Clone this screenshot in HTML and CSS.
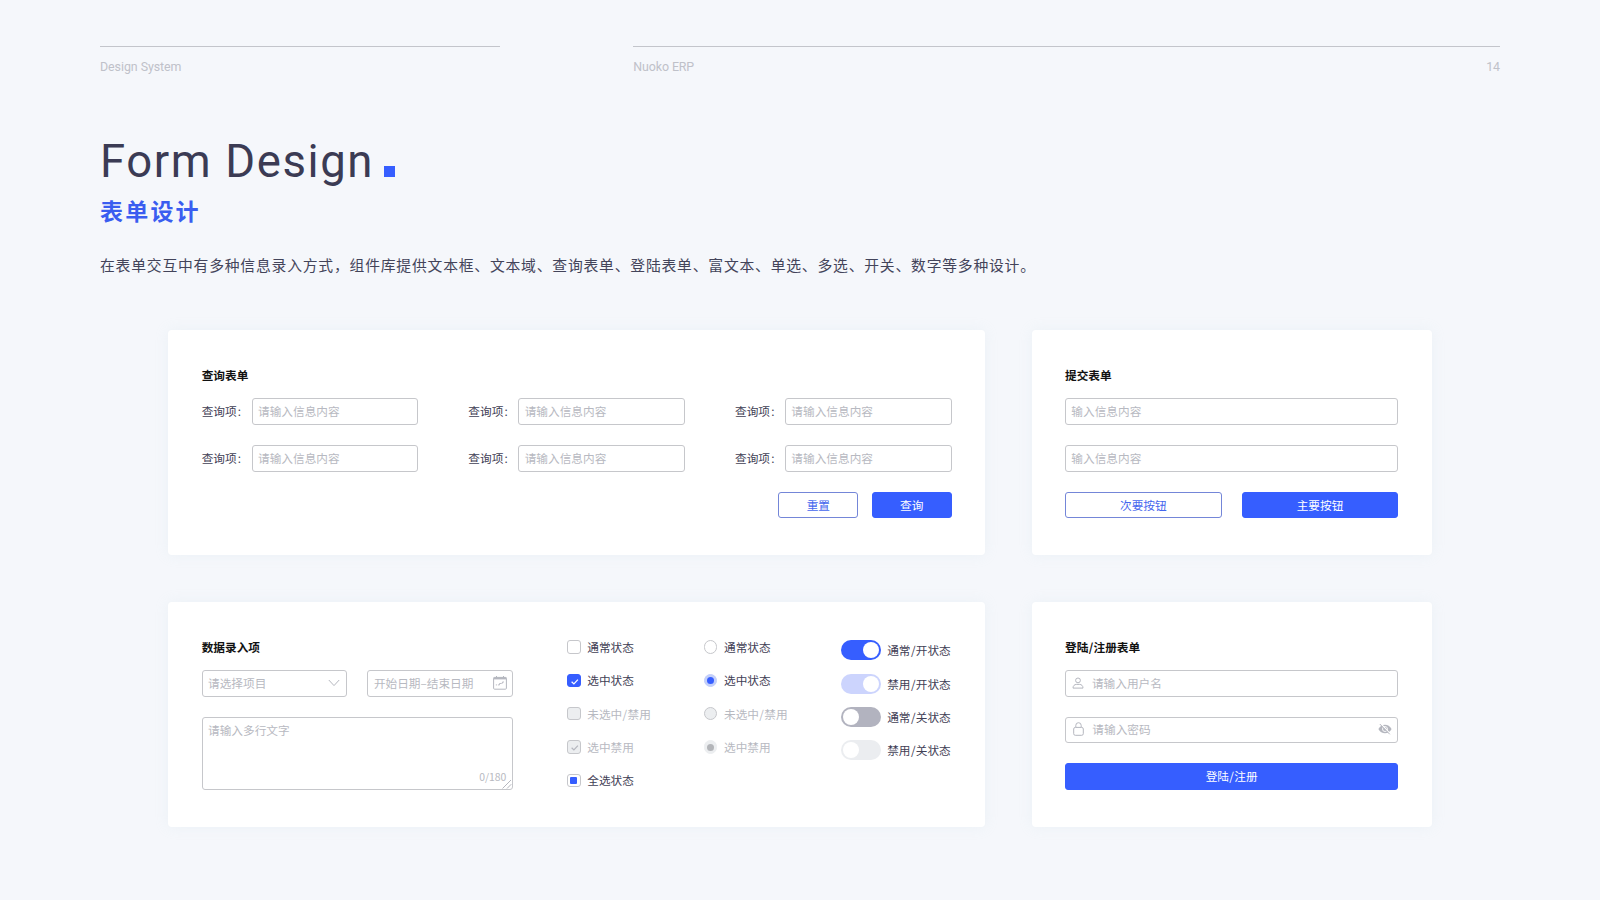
FILE: index.html
```html
<!DOCTYPE html>
<html lang="zh-CN">
<head>
<meta charset="utf-8">
<title>Form Design</title>
<link rel="stylesheet" href="styles.css">
</head>
<body>
<div class="page">
  <header class="top">
    <div class="top-left"><span>Design System</span></div>
    <div class="top-right"><span>Nuoko ERP</span><span>14</span></div>
  </header>
  <section class="intro">
    <h1 class="title"><span class="title-text">Form Design</span><i class="dot"></i></h1>
    <h2 class="subtitle">表单设计</h2>
    <p class="desc">在表单交互中有多种信息录入方式，组件库提供文本框、文本域、查询表单、登陆表单、富文本、单选、多选、开关、数字等多种设计。</p>
  </section>
  <main class="cards">
    <section class="card">
      <h3 class="card-title">查询表单</h3>
      <div class="query-grid">
        <div class="query"><span class="label">查询项<span class="colon">:</span></span><div class="field">请输入信息内容</div></div>
        <div class="query"><span class="label">查询项<span class="colon">:</span></span><div class="field">请输入信息内容</div></div>
        <div class="query"><span class="label">查询项<span class="colon">:</span></span><div class="field">请输入信息内容</div></div>
        <div class="query"><span class="label">查询项<span class="colon">:</span></span><div class="field">请输入信息内容</div></div>
        <div class="query"><span class="label">查询项<span class="colon">:</span></span><div class="field">请输入信息内容</div></div>
        <div class="query"><span class="label">查询项<span class="colon">:</span></span><div class="field">请输入信息内容</div></div>
      </div>
      <div class="query-actions"><div class="btn small">重置</div><div class="btn primary small">查询</div></div>
    </section>

    <section class="card">
      <h3 class="card-title">提交表单</h3>
      <div class="stack">
        <div class="field">输入信息内容</div>
        <div class="field">输入信息内容</div>
        <div class="split"><div class="btn">次要按钮</div><div class="btn primary">主要按钮</div></div>
      </div>
    </section>

    <section class="card entry">
      <div class="entry-form">
        <h3 class="card-title">数据录入项</h3>
        <div class="stack">
          <div class="split">
            <div class="field select">请选择项目
              <svg class="chevron" viewBox="0 0 12 8"><path d="M.8 1 6 6.6 11.2 1"/></svg>
            </div>
            <div class="field date">开始日期–结束日期
              <svg class="calendar" viewBox="0 0 14 14"><rect x=".6" y="1.4" width="12.8" height="11.8" rx="1"/><path class="band" d="M.6 2.4h12.8"/><path d="M3.500 0v3M10.500 0v3"/><path class="marks" d="M2.800 8.900h1.300M5 8.900h1.500V7.500h2.200M9.400 7.500V6h1.600"/></svg>
            </div>
          </div>
          <div class="field area">请输入多行文字
            <span class="count">0/180</span>
            <svg class="grip" viewBox="0 0 10 10"><path d="M.5 9.500 9 1M5 9.500 9.300 5.200"/></svg>
          </div>
        </div>
      </div>
      <ul class="options checks">
        <li><i class="box"></i>通常状态</li>
        <li><i class="box on"><svg viewBox="0 0 14 14"><path d="m3.800 7.100 2.400 2.300 4.200-4.500"/></svg></i>选中状态</li>
        <li class="off"><i class="box dim"></i>未选中<span class="slash">/</span>禁用</li>
        <li class="off"><i class="box dim"><svg viewBox="0 0 14 14"><path d="m3.800 7.100 2.400 2.300 4.200-4.500"/></svg></i>选中禁用</li>
        <li><i class="box all"></i>全选状态</li>
      </ul>
      <ul class="options radios">
        <li><i class="radio"></i>通常状态</li>
        <li><i class="radio on"></i>选中状态</li>
        <li class="off"><i class="radio dim"></i>未选中<span class="slash">/</span>禁用</li>
        <li class="off"><i class="radio dim-on"></i>选中禁用</li>
      </ul>
      <ul class="options switches">
        <li><i class="switch on"></i>通常<span class="slash">/</span>开状态</li>
        <li><i class="switch on-dim"></i>禁用<span class="slash">/</span>开状态</li>
        <li><i class="switch"></i>通常<span class="slash">/</span>关状态</li>
        <li><i class="switch off-dim"></i>禁用<span class="slash">/</span>关状态</li>
      </ul>
    </section>

    <section class="card">
      <h3 class="card-title">登陆<span class="slash">/</span>注册表单</h3>
      <div class="stack">
        <div class="field login"><svg class="user" viewBox="0 0 12 12"><circle cx="6" cy="3.400" r="2.400"/><path d="M1 11.100c0-2.400 1.600-3.700 3.300-3.700h3.400c1.700 0 3.300 1.300 3.300 3.700z"/></svg>请输入用户名</div>
        <div class="field login pass"><svg class="lock" viewBox="0 0 11 14"><rect x=".7" y="5.400" width="9.600" height="7.900" rx="1.600"/><path d="M2.800 5.200V3.400a2.700 2.700 0 0 1 5.400 0v1.800"/></svg>请输入密码
          <svg class="eye" viewBox="0 0 14 12"><path class="solid" d="M.4 6C2 3.100 4.300 1.700 7 1.700S12 3.100 13.600 6C12 8.900 9.700 10.300 7 10.300S2 8.900.4 6z"/><circle class="pupil" cx="7" cy="6" r="2.500"/><path class="gap" d="M2.600.5 12.400 10.900"/><path d="m1.800 1 10 10.300"/></svg>
        </div>
        <div class="btn primary">登陆<span class="slash">/</span>注册</div>
      </div>
    </section>
  </main>
</div>
</body>
</html>
```
FILE: styles.css
```css
* { box-sizing: border-box; }
body {
  margin: 0;
  background: #f5f7fb;
  color: #3f4055;
  font: 11.67px/20px "Noto Sans CJK SC", sans-serif;
}
h1, h2, h3, p, ul { margin: 0; padding: 0; }
ul { list-style: none; }
i { font-style: normal; }
svg { fill: none; stroke: #b5b7bf; stroke-width: 1; flex: none; }

.page { width: 1600px; height: 900px; padding: 45.5px 100px 0; overflow: hidden; }

.top { display: grid; grid-template-columns: 400px 866.67px; column-gap: 133.33px; font: 12.4px/20px Roboto, sans-serif; color: #bfc1c9; }
.top-left, .top-right { display: flex; justify-content: space-between; border-top: 1px solid #c3c5cb; padding-top: 10.4px; height: 40px; }
.top-left { letter-spacing: -.05px; }
.top-right { letter-spacing: -.1px; }

.intro { height: 244.5px; padding-top: 46.4px; }
.title { display: flex; align-items: baseline; height: 60px; font: 400 45.5px/60px Roboto, sans-serif; color: #3b3b54; }
.title-text { width: 284px; letter-spacing: 1.6px; white-space: nowrap; }
.dot { width: 10.5px; height: 10.5px; background: #365eff; }
.subtitle { margin-top: 2.1px; font-size: 23px; line-height: 32px; letter-spacing: 2.2px; color: #3a5df0; }
.desc { margin-top: 27px; font-size: 14.8px; line-height: 24px; letter-spacing: .8px; white-space: nowrap; color: #43445a; }

.cards { display: grid; grid-template-columns: 816.67px 400px; grid-auto-rows: 225px; gap: 46.67px; margin-left: 68.33px; }
.card { background: #fff; border-radius: 4px; padding: 35.33px 33.33px 0; box-shadow: 0 0 14px rgba(190, 215, 225, .16); }
.card-title { height: 33px; font-size: 11.67px; line-height: 20px; font-weight: 700; color: #111; white-space: nowrap; }
.slash { margin: 0 .35px; }

.field {
  position: relative;
  display: flex;
  align-items: center;
  height: 26.67px;
  padding: 0 5.4px 1.1px;
  border: 1px solid #c6c7cb;
  border-radius: 3px;
  color: #b7b9c1;
  white-space: nowrap;
}
.query-grid { display: grid; grid-template-columns: repeat(3, 216.67px); column-gap: 50px; row-gap: 20px; }
.query { display: flex; align-items: center; }
.label { width: 50px; padding-bottom: 1.1px; white-space: nowrap; }
.colon { margin-left: 1.2px; }
.query .field { flex: 1; }
.query-actions { display: flex; justify-content: flex-end; gap: 13.33px; margin-top: 20px; }

.btn { flex: 1; height: 26.67px; line-height: 23.6px; border: 1px solid #7486d8; border-radius: 3px; text-align: center; color: #4466ee; background: #fff; }
.btn.primary { border-color: #365eff; background: #365eff; color: #fff; }
.btn.small { flex: 0 0 80px; }

.stack { display: flex; flex-direction: column; gap: 20px; }
.stack > .btn { flex: none; height: 26.67px; line-height: 24.67px; }
.split { display: flex; gap: 20px; }
.split .field { flex: 1; justify-content: space-between; }

.entry { display: flex; }
.entry-form { width: 311.67px; }
.chevron { width: 12px; height: 8px; margin-right: 1px; }
.calendar { width: 14px; height: 14px; }
.calendar .band { stroke-width: 2; }
.calendar .marks { stroke-width: .9; }
.area { height: 73.33px; align-items: flex-start; padding-top: 1.9px; }
.count { position: absolute; right: 6px; bottom: 1.6px; font-size: 10.4px; }
.grip { position: absolute; right: 0; bottom: 0; width: 10px; height: 10px; }

.options { display: grid; grid-auto-rows: 20px; row-gap: 13.33px; align-content: start; margin-top: .1px; white-space: nowrap; }
.options li { display: flex; align-items: center; }
.options .off { color: #b7b9c1; }
.checks { margin-left: 54px; width: 136.8px; }
.radios { width: 136.5px; }
.switches { margin-top: 3.5px; }

.box, .radio { display: grid; place-items: center; width: 13.33px; height: 13.33px; margin-right: 6.6px; border: 1px solid #c6c7cb; }
.box { border-radius: 3px; }
.box svg { width: 13.33px; height: 13.33px; stroke-width: 1.3; }
.box.on { border-color: #365eff; background: #365eff; }
.box.on svg { stroke: #fff; }
.box.dim, .radio.dim { background: #eceef0; }
.box.all::after { content: ""; width: 7px; height: 7px; border-radius: 1px; background: #365eff; }
.radio { border-radius: 50%; }
.radio.on { border-color: #c3cffa; background: #c3cffa; }
.radio.dim-on { border-color: #eceef0; background: #eceef0; }
.radio.on::after, .radio.dim-on::after { content: ""; width: 7px; height: 7px; border-radius: 50%; background: #365eff; }
.radio.dim-on::after { background: #b3b5b9; }

.switch { display: flex; width: 40px; height: 20px; padding: 2px; margin-right: 6.6px; border-radius: 10px; background: #b2b3bf; }
.switch::after { content: ""; width: 16px; height: 16px; border-radius: 50%; background: #fff; }
.switch.on, .switch.on-dim { justify-content: flex-end; background: #365eff; }
.switch.on-dim { background: #ccd4fd; }
.switch.off-dim { background: #ebedf0; }

.login { gap: 8px; }
.user { width: 12px; height: 12px; margin-left: .6px; }
.lock { width: 11px; height: 14px; margin-left: 2px; }
.eye { width: 14px; height: 12px; margin-left: auto; }
.eye .solid { fill: #b5b7bf; stroke: none; }
.eye .pupil { stroke: #fff; stroke-width: .9; }
.eye .gap { stroke: #fff; stroke-width: 1.2; }
```
